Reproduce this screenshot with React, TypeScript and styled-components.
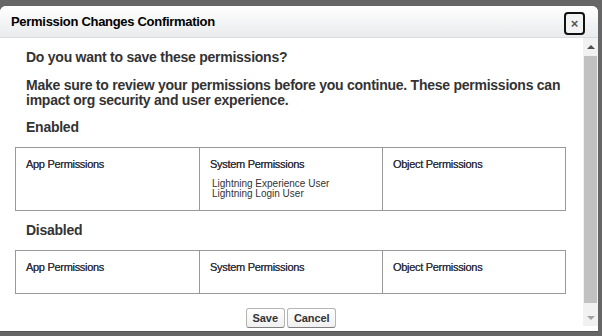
import React from "react";
import styled, { createGlobalStyle } from "styled-components";

const Global = createGlobalStyle`
  html, body { margin: 0; padding: 0; background: #666; }
  body { font-family: Arial, "Liberation Sans", sans-serif; width: 602px; height: 336px; overflow: hidden; }
`;

const Page = styled.div`
  padding-top: 6px;
  width: 598px;
`;

const Dialog = styled.div`
  background: #fff;
  border-radius: 6px 6px 0 0;
  border-bottom: 1px solid #555;
  height: 325px;
  display: flex;
  flex-direction: column;
  overflow: hidden;
`;

const Header = styled.div`
  height: 31px;
  flex: none;
  display: flex;
  align-items: center;
  justify-content: space-between;
  padding: 0 13px 0 11px;
  background: linear-gradient(#ffffff, #e9ebec);
  border-bottom: 1px solid #d7dcdd;
`;

const Title = styled.h2`
  margin: 0;
  font-size: 13px;
  letter-spacing: -0.3px;
  font-weight: bold;
  color: #000;
`;

const Close = styled.button`
  width: 21px;
  height: 23px;
  box-sizing: border-box;
  border: 2px solid #111;
  border-radius: 4px;
  background: #f2f3f3;
  color: #555;
  font-size: 13px;
  font-weight: bold;
  padding: 0;
  line-height: 1;
  display: flex;
  align-items: center;
  justify-content: center;
  margin-top: 3px;
`;

const Body = styled.div`
  flex: 1;
  display: flex;
  min-height: 0;
`;

const Content = styled.div`
  flex: 1;
  padding: 12px 17px 0 15px;
  color: #333;
`;

const Para = styled.p`
  margin: 0 0 13px 11px;
  font-size: 14px;
  letter-spacing: -0.25px;
  font-weight: bold;
  line-height: 15px;
  &:last-of-type { margin-bottom: 11px; }
`;

const Section = styled.h3`
  margin: 0 0 12px 11px;
  font-size: 14px;
  letter-spacing: -0.25px;
  font-weight: bold;
  line-height: 16px;
`;

const Table = styled.div<{ $h: number }>`
  display: grid;
  grid-template-columns: 183px 183px 1fr;
  border: 1px solid #999;
  height: ${(p) => p.$h}px;
  box-sizing: border-box;
  margin-bottom: 11px;
`;

const Cell = styled.div`
  padding: 10px 10px 0 10px;
  & + & { border-left: 1px solid #999; }
`;

const CellTitle = styled.div`
  font-size: 11px;
  letter-spacing: -0.3px;
  color: #334;
  line-height: 13px;
  text-shadow: 0 0 0.3px #333;
`;

const List = styled.ul`
  list-style: none;
  margin: 8px 0 0 2px;
  padding: 0;
  font-size: 10px;
  line-height: 10px;
  color: #333;
`;

const Buttons = styled.div`
  display: flex;
  justify-content: center;
  gap: 2px;
  padding-top: 3px;
  margin-left: 1px;
`;

const Btn = styled.button`
  height: 20px;
  box-sizing: border-box;
  padding: 0 6px;
  border: 1px solid #b5b5b5;
  border-bottom-color: #7f7f7f;
  border-radius: 3px;
  background: linear-gradient(#ffffff, #f0f0f0);
  color: #333;
  font-family: Arial, "Liberation Sans", sans-serif;
  font-size: 11px;
  letter-spacing: -0.1px;
  font-weight: bold;
`;

const Scrollbar = styled.div`
  width: 15px;
  flex: none;
  display: flex;
  flex-direction: column;
  background: #f1f1f1;
  margin-bottom: 5px;
`;

const Arrow = styled.div<{ $down?: boolean }>`
  height: 17px;
  display: flex;
  align-items: center;
  justify-content: center;
  &::after {
    content: "";
    border-left: 4px solid transparent;
    border-right: 4px solid transparent;
    ${(p) => (p.$down ? "border-top: 4px solid #a3a3a3;" : "border-bottom: 4px solid #505050;")}
  }
`;

const Thumb = styled.div`
  flex: 1;
  margin: 1px 1px 6px 1px;
  background: #c1c1c1;
`;

const PermTable = ({ h, system }: { h: number; system?: string[] }) => (
  <Table $h={h}>
    <Cell>
      <CellTitle>App Permissions</CellTitle>
    </Cell>
    <Cell>
      <CellTitle>System Permissions</CellTitle>
      {system && (
        <List>
          {system.map((s) => (
            <li key={s}>{s}</li>
          ))}
        </List>
      )}
    </Cell>
    <Cell>
      <CellTitle>Object Permissions</CellTitle>
    </Cell>
  </Table>
);

export default function App() {
  return (
    <>
      <Global />
      <Page>
        <Dialog>
          <Header>
            <Title>Permission Changes Confirmation</Title>
            <Close>×</Close>
          </Header>
          <Body>
            <Content>
              <Para>Do you want to save these permissions?</Para>
              <Para>
                Make sure to review your permissions before you continue. These permissions can impact org
                security and user experience.
              </Para>
              <Section>Enabled</Section>
              <PermTable h={64} system={["Lightning Experience User", "Lightning Login User"]} />
              <Section>Disabled</Section>
              <PermTable h={44} />
              <Buttons>
                <Btn>Save</Btn>
                <Btn>Cancel</Btn>
              </Buttons>
            </Content>
            <Scrollbar>
              <Arrow />
              <Thumb />
              <Arrow $down />
            </Scrollbar>
          </Body>
        </Dialog>
      </Page>
    </>
  );
}
